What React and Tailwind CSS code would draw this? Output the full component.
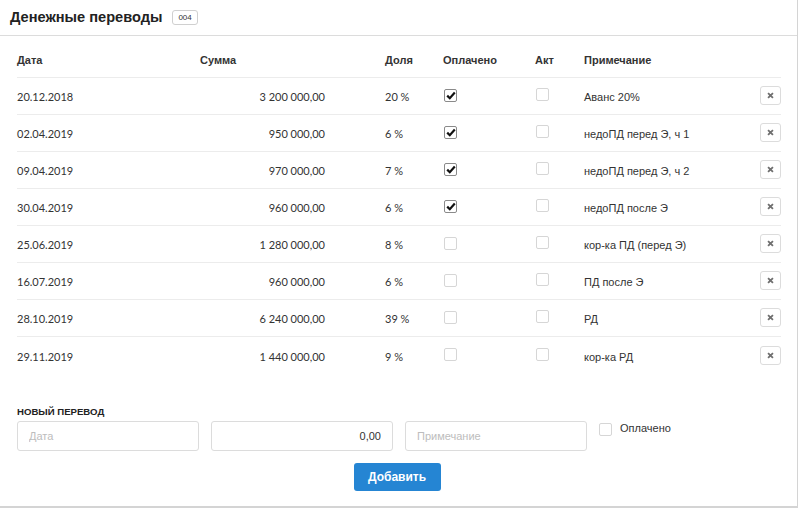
import React, { useState } from 'react';

const rows = [
    { date: "20.12.2018", sum: "3 200 000,00", share: "20 %", paid: true, act: false, note: "Аванс 20%" },
    { date: "02.04.2019", sum: "950 000,00", share: "6 %", paid: true, act: false, note: "недоПД перед Э, ч 1" },
    { date: "09.04.2019", sum: "970 000,00", share: "7 %", paid: true, act: false, note: "недоПД перед Э, ч 2" },
    { date: "30.04.2019", sum: "960 000,00", share: "6 %", paid: true, act: false, note: "недоПД после Э" },
    { date: "25.06.2019", sum: "1 280 000,00", share: "8 %", paid: false, act: false, note: "кор-ка ПД (перед Э)" },
    { date: "16.07.2019", sum: "960 000,00", share: "6 %", paid: false, act: false, note: "ПД после Э" },
    { date: "28.10.2019", sum: "6 240 000,00", share: "39 %", paid: false, act: false, note: "РД" },
    { date: "29.11.2019", sum: "1 440 000,00", share: "9 %", paid: false, act: false, note: "кор-ка РД" },
];

const cols = "grid grid-cols-[183px_125px_60px_58px_92px_49px_1fr_21px] items-center";

function Check({ checked }) {
    return (
        <div
            className={
                "w-[13px] h-[13px] rounded-[2px] border bg-white flex items-center justify-center " +
                (checked ? "border-[#8a8a8a]" : "border-[#d6d6d6]")
            }
        >
            {checked && (
                <svg width="10" height="9" viewBox="0 0 10 9">
                    <path d="M1.2 4.6 L3.8 7.2 L8.8 1.6" fill="none" stroke="#111" strokeWidth="2.2" />
                </svg>
            )}
        </div>
    );
}

function RemoveButton() {
    return (
        <button className="w-[21px] h-[19px] border border-[#dcdcdc] rounded-[3px] bg-white flex items-center justify-center">
            <svg width="7" height="7" viewBox="0 0 10 10">
                <path d="M1.5 1.5 L8.5 8.5 M8.5 1.5 L1.5 8.5" stroke="#6f6f6f" strokeWidth="2.6" />
            </svg>
        </button>
    );
}

function App() {
    const [form, setForm] = useState({ date: "", sum: "0,00", note: "" });

    return (
        <div className="w-[799px] h-[509px] bg-white font-['Liberation_Sans',Arial,sans-serif] text-[#333]">
            <div className="w-[798px] h-[508px] border-r border-b-2 border-[#d4d4d4] flex flex-col">
                {/* заголовок */}
                <div className="h-[36px] border-b border-[#dcdcdc] flex items-center pl-[10px] gap-[10px]">
                    <h1 className="text-[14.6px] font-bold text-[#222]">Денежные переводы</h1>
                    <span className="h-[15px] px-[5px] border border-[#d0d0d0] rounded-[3px] text-[8px] leading-[13px] text-[#333]">004</span>
                </div>

                {/* таблица */}
                <div className="pl-[17px] pr-[16px] pt-[7px]">
                    <div className={cols + " h-[35px] border-b border-[#ececec] text-[11px] font-bold text-[#333]"}>
                        <div>Дата</div>
                        <div>Сумма</div>
                        <div></div>
                        <div>Доля</div>
                        <div>Оплачено</div>
                        <div>Акт</div>
                        <div>Примечание</div>
                        <div></div>
                    </div>
                    {rows.map((r, i) => (
                        <div
                            key={i}
                            className={
                                cols +
                                " h-[37px] text-[11px] " +
                                (i < rows.length - 1 ? "border-b border-[#ececec]" : "")
                            }
                        >
                            <div className="font-['Lato',sans-serif] pt-[3px]">{r.date}</div>
                            <div className="font-['Lato',sans-serif] text-right pt-[3px]">{r.sum}</div>
                            <div></div>
                            <div className="font-['Lato',sans-serif] pt-[3px]">{r.share}</div>
                            <div className="pl-[1px] pb-[2px]"><Check checked={r.paid} /></div>
                            <div className="pl-[1px] pb-[3px]"><Check checked={r.act} /></div>
                            <div className="pt-[3px]">{r.note}</div>
                            <div className="pb-[1px]"><RemoveButton /></div>
                        </div>
                    ))}
                </div>

                {/* новый перевод */}
                <div className="pl-[17px] mt-[31px]">
                    <div className="text-[9.6px] font-bold text-[#222] leading-[14px] mb-[2px]">НОВЫЙ ПЕРЕВОД</div>
                    <div className="flex gap-[12px] items-start">
                        <input
                            value={form.date}
                            onChange={(e) => setForm({ ...form, date: e.target.value })}
                            placeholder="Дата"
                            className="w-[182px] h-[30px] border border-[#dcdcdc] rounded-[3px] px-[11px] text-[11px] placeholder-[#bdbdbd] outline-none"
                        />
                        <input
                            value={form.sum}
                            onChange={(e) => setForm({ ...form, sum: e.target.value })}
                            className="w-[182px] h-[30px] border border-[#dcdcdc] rounded-[3px] px-[11px] text-[11px] text-right text-[#333] outline-none"
                        />
                        <input
                            value={form.note}
                            onChange={(e) => setForm({ ...form, note: e.target.value })}
                            placeholder="Примечание"
                            className="w-[182px] h-[30px] border border-[#dcdcdc] rounded-[3px] px-[11px] text-[11px] placeholder-[#bdbdbd] outline-none"
                        />
                        <label className="flex items-center gap-[8px] pt-[1px] text-[11px] text-[#333]">
                            <Check checked={false} />
                            <span className="-mt-[2px]">Оплачено</span>
                        </label>
                    </div>
                </div>
                <div className="flex justify-center mt-[12px] pr-[3px]">
                    <button className="w-[87px] h-[28px] bg-[#2585d3] rounded-[3px] text-white text-[12px] font-bold">
                        Добавить
                    </button>
                </div>
            </div>
        </div>
    );
}

export default App;
